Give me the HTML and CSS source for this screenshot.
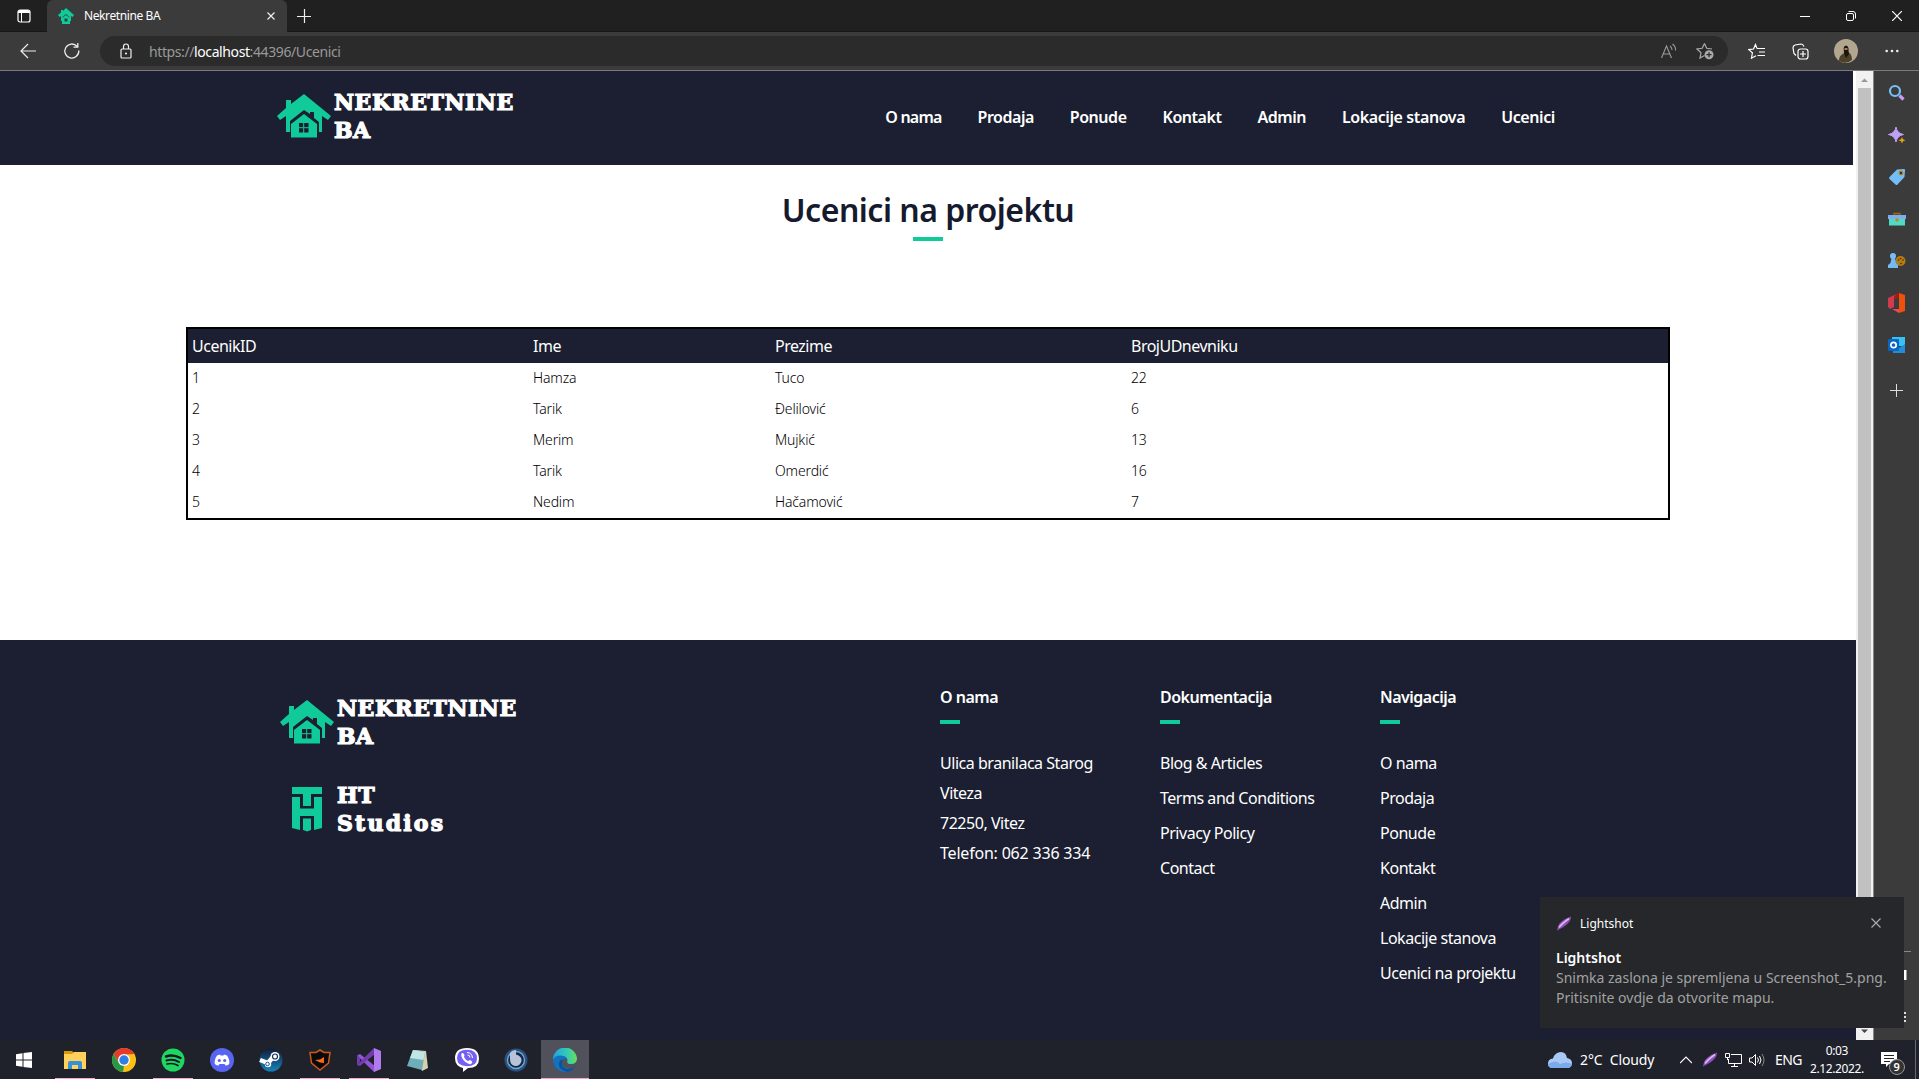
FILE: index.html
```html
<!DOCTYPE html>
<html lang="bs">
<head>
<meta charset="utf-8">
<title>Nekretnine BA</title>
<link rel="stylesheet" href="styles.css">
</head>
<body>
<svg class="defs" width="0" height="0">
  <defs>
    <symbol id="house" viewBox="0 0 54 45">
      <path fill="#10cb99" d="M27 0 54 22 51 26 45 22V38H42V28L37 24V18H33V20L27 16 13 27V38H9V22L3 26 0 22 9 14V6H14V10Z"/>
      <path fill="#10cb99" d="M27 20 40 30V43.500H14V30Z"/>
      <path fill="#1b1f31" d="M22 29H31.500V38.500H22Z"/>
      <path stroke="#10cb99" d="M26.700 29V39M22 33.700H32"/>
    </symbol>
    <symbol id="feather" viewBox="0 0 16 16">
      <path fill="#8e4fb8" d="M1 15C2 7 7 4 15 1 15 7 9 11 1 15Z"/><path d="M3 12C6 8 9 6 13 3" stroke="#dcb6ee" stroke-width="1.600" fill="none"/>
    </symbol>
  </defs>
</svg>
<div class="screen">
  <div class="tabstrip">
    <div class="workspaces"><svg width="14" height="16" viewBox="0 0 14 16"><rect x="1" y="2" width="12" height="12" rx="2" fill="none" stroke="#fff" stroke-width="1.200"/><path d="M1 4a3 3 0 0 1 3-2h6a3 3 0 0 1 3 2v1H1Z" fill="#fff"/><path d="M4.500 5v9" stroke="#fff"/></svg></div>
    <div class="tab">
      <svg width="16" height="16" viewBox="0 0 16 16"><path d="M8 0 16 7 14.500 9 13 8V13H11.500V9L8 6 4.500 9V13H3V8L1.500 9 0 7 3 4.500V2H5V3Z" fill="#10cb99"/><path d="M8 7 12 10V16H4V10Z" fill="#10cb99"/><path d="M6.500 10.500h3v3h-3Z" fill="#25493f"/></svg>
      <span class="tab-title">Nekretnine BA</span>
      <svg width="10" height="10" viewBox="0 0 10 10"><path d="M1.500 1.500l7 7M8.500 1.500l-7 7" stroke="#eee" stroke-width="1.200"/></svg>
    </div>
    <svg class="newtab" width="14" height="14" viewBox="0 0 14 14"><path d="M7.500 0v14M0 7.500h14" stroke="#eee" stroke-width="1.200"/></svg>
    <div class="window-buttons">
      <svg width="10" height="10" viewBox="0 0 10 10"><path d="M0 5.500h10" stroke="#fff"/></svg>
      <svg width="10" height="10" viewBox="0 0 10 10" fill="none" stroke="#fff"><rect x=".5" y="2.500" width="7" height="7" rx="1.500"/><path d="M2.500 .5H7A2.500 2.500 0 0 1 9.500 3V7.500"/></svg>
      <svg width="10" height="10" viewBox="0 0 10 10"><path d="M0 0l10 10M10 0L0 10" stroke="#fff" stroke-width="1.200"/></svg>
    </div>
  </div>
  <div class="toolbar">
    <svg width="16" height="16" viewBox="0 0 16 16" fill="none" stroke="#eee" stroke-width="1.200"><path d="M8 1 1 8l7 7M1 8h15"/></svg>
    <svg class="reload" width="18" height="18" viewBox="0 0 18 18" fill="none" stroke="#eee" stroke-width="1.300"><path d="M15.800 8.500A7 7 0 1 1 14 4.300M14.800 1v4.200H10.500"/></svg>
    <div class="address">
      <svg width="12" height="16" viewBox="0 0 12 16" fill="none" stroke="#eee" stroke-width="1.200"><rect x="1" y="6" width="10" height="9" rx="1"/><path d="M3.500 6V3.500a2.500 2.500 0 0 1 5 0V6"/><circle cx="6" cy="10.500" r=".5" fill="#eee"/></svg>
      <span class="url">https://<b>localhost</b>:44396/Ucenici</span>
      <svg width="16" height="16" viewBox="0 0 16 16" fill="none" stroke="#999" stroke-width="1.100"><path d="M.5 15 5.500 3l5 12M2.300 11h6.400M9 3a5 5 0 0 1 2 4M11.500 1a7 7 0 0 1 3 6.500"/></svg>
      <svg class="star" width="18" height="18" viewBox="0 0 18 18"><path d="M8.500 1.500 6.200 6.300 1 7l4 3.700-1 5.400 4.500-2.500M8.500 1.500l2.200 4.800L16 7" fill="none" stroke="#aaa" stroke-width="1.200"/><circle cx="13" cy="12.700" r="4.500" fill="#aaa"/><path d="M13 10.200v5M10.500 12.700h5" stroke="#2b2b2b" stroke-width="1.200"/></svg>
    </div>
    <div class="toolbar-actions">
      <svg width="17" height="17" viewBox="0 0 17 17" fill="none" stroke="#fff" stroke-width="1.200"><path d="M9 5.500h8M11 9h6M9.500 12.500H17M9 5.500 7.500 1.500 5.500 6 .8 6.600l3.600 3.200-.9 5.400 4.500-2.400"/></svg>
      <svg width="17" height="17" viewBox="0 0 17 17" fill="none" stroke="#fff" stroke-width="1.200"><rect x="6" y="6" width="10" height="10" rx="2.500"/><path d="M11 8v6M8 11h6M4 12.500 2 10.500 1 5a3 3 0 0 1 2-3L9 1q2 0 3 2.500"/></svg>
      <svg width="24" height="24" viewBox="0 0 24 24"><circle cx="12" cy="12" r="12" fill="#b3a68f"/><path d="M5 22C5 16 9 15 10 14L9.500 9Q12 5 14.500 9L14 13q4 2 4 8-6 5-13 1Z" fill="#4d4227"/><path d="M10 8q2-3 4 0l1 7-3 4-2-5Z" fill="#1b1512"/><path d="M10.500 9h3v2h-3Z" fill="#b57a5c"/></svg>
      <svg width="14" height="4" viewBox="0 0 14 4" fill="#eee"><circle cx="1.700" cy="2" r="1.300"/><circle cx="7" cy="2" r="1.300"/><circle cx="12.300" cy="2" r="1.300"/></svg>
    </div>
  </div>
  <div class="viewport">
    <div class="page">
      <header class="site-header">
        <div class="brand"><svg width="54" height="45"><use href="#house"/></svg><span>NEKRETNINE<br>BA</span></div>
        <nav><a class="short">O nama</a><a>Prodaja</a><a>Ponude</a><a>Kontakt</a><a>Admin</a><a class="long">Lokacije stanova</a><a class="long">Ucenici</a></nav>
      </header>
      <main>
        <h1>Ucenici na projektu</h1>
        <div class="rule"></div>
        <table>
          <colgroup><col class="c1"><col class="c2"><col class="c3"><col></colgroup>
          <tr><th>UcenikID</th><th>Ime</th><th>Prezime</th><th>BrojUDnevniku</th></tr>
          <tr><td>1</td><td>Hamza</td><td>Tuco</td><td>22</td></tr>
          <tr><td>2</td><td>Tarik</td><td>Đelilović</td><td>6</td></tr>
          <tr><td>3</td><td>Merim</td><td>Mujkić</td><td>13</td></tr>
          <tr><td>4</td><td>Tarik</td><td>Omerdić</td><td>16</td></tr>
          <tr><td>5</td><td>Nedim</td><td>Hačamović</td><td>7</td></tr>
        </table>
      </main>
      <footer>
        <div class="footer-brands">
          <div class="brand"><svg width="54" height="45"><use href="#house"/></svg><span>NEKRETNINE<br>BA</span></div>
          <div class="brand studio"><svg width="32" height="45" viewBox="0 0 32 45" fill="#10cb99"><path d="M1 0H31V7H20V19H12V7H1Z"/><path d="M1 10H9V21.500H23V10H31V41L23 43V29H9V43L1 41Z"/><path d="M12 31.500H20V43L16 44.500 12 43Z"/></svg><span>HT<br><span class="wide">Studios</span></span></div>
        </div>
        <section><h2>O nama</h2><p>Ulica branilaca Starog<br>Viteza<br>72250, Vitez<br><span class="phone">Telefon: 062 336 334</span></p></section>
        <section><h2>Dokumentacija</h2><ul><li>Blog &amp; Articles</li><li>Terms and Conditions</li><li>Privacy Policy</li><li>Contact</li></ul></section>
        <section><h2>Navigacija</h2><ul><li>O nama</li><li>Prodaja</li><li>Ponude</li><li>Kontakt</li><li>Admin</li><li>Lokacije stanova</li><li>Ucenici na projektu</li></ul></section>
      </footer>
    </div>
    <div class="scrollbar">
      <svg width="17" height="17" viewBox="0 0 17 17"><path d="M5 11 8.500 7.500 12 11Z" fill="#999"/></svg>
      <div class="thumb"></div>
      <svg width="17" height="17" viewBox="0 0 17 17"><path d="M5 6.500 8.500 10 12 6.500Z" fill="#444"/></svg>
    </div>
    <aside>
      <svg width="18" height="18" viewBox="0 0 18 18"><circle cx="7" cy="7" r="5" fill="none" stroke="#75c1f7" stroke-width="2.200"/><path d="M11.500 11.500 15.500 15.500" stroke="#c89df5" stroke-width="3.200"/></svg>
      <svg width="18" height="18" viewBox="0 0 18 18"><path d="M8 1 Q8.800 7.200 15.500 8.500 Q9 9.800 8 16 Q7 9.800.5 8.500 Q7 7.200 8 1Z" fill="#bfa0f5" stroke="#bfa0f5"/><path d="M14 11 15 13.200 17.500 14.200 15 15.200 14 17.500 13 15.200 10.500 14.200 13 13.200Z" fill="#e8a40c"/></svg>
      <svg width="18" height="18" viewBox="0 0 18 18"><path d="M9 1.500 16 1Q17 1 17 2L16.500 9 9.500 16.500Q8.500 17.500 7.500 16.500L1.500 11Q.5 10 1.500 9Z" fill="#75bdf7"/><circle cx="13" cy="5" r="1.800" fill="#333" stroke="#bb8200" stroke-width="1.200"/></svg>
      <svg width="18" height="18" viewBox="0 0 18 18"><path d="M6 6V3.500h6V6" fill="none" stroke="#9d700c" stroke-width="1.300"/><path d="M1 9H17V15.500H1Z" fill="#52d9c1"/><path d="M0 5H18V9H0Z" fill="#80acf0"/><circle cx="9" cy="10" r="1.700" fill="#bf8a18"/></svg>
      <svg width="18" height="18" viewBox="0 0 18 18"><circle cx="12.500" cy="9" r="5" fill="#b57c13"/><g fill="#3b2a08"><circle cx="10.500" cy="8" r=".8"/><circle cx="12.500" cy="6.500" r=".8"/><circle cx="15" cy="8" r=".8"/><circle cx="13" cy="11.500" r=".8"/></g><circle cx="5" cy="4" r="3" fill="#7bbcf8"/><path d="M3.500 6h3.500l1 5 2 2v3H0V13l2.500-2Z" fill="#75b9f5"/></svg>
      <svg class="office" width="18" height="20" viewBox="0 0 18 20"><path d="M11 0V4L6 6V14L2 16 0 14V5Z" fill="#d13a4f"/><path d="M9 0 11 0V4L6 6V4Z" fill="#a81715"/><path d="M4 16 11 16V20Z" fill="#ed4661"/><path d="M11 0 17 2V18L11 20Z" fill="#ee5109"/></svg>
      <svg width="18" height="18" viewBox="0 0 18 18"><path d="M4 1H17V10H4Z" fill="#37c2f3"/><path d="M5 9 11 12 17 8V17H5Z" fill="#208dd5"/><rect y="3" width="11" height="12" rx="1" fill="#0867c4"/><circle cx="5.500" cy="9" r="2.700" fill="none" stroke="#fff" stroke-width="1.700"/></svg>
      <svg class="aside-add" width="13" height="13" viewBox="0 0 13 13"><path d="M6.500 0v13M0 6.500h13" stroke="#ddd"/></svg>
      <div class="aside-bottom"><i></i><svg width="6" height="12" viewBox="0 0 6 12"><path d="M0 1H2.500V11H0" fill="#fff"/></svg><svg width="6" height="12" viewBox="0 0 6 12" fill="#ddd"><path d="M0 1H2V3H0ZM0 5H2V7H0ZM0 9H2V11H0Z"/></svg></div>
    </aside>
  </div>
  <div class="taskbar">
    <div class="apps">
      <div class="app start"><svg width="16" height="16" viewBox="0 0 16 16" fill="#fff"><path d="M0 2.200 6.500 1.300V7.500H0ZM7.500 1.100 16 0V7.500H7.500ZM0 8.500H6.500V14.700L0 13.800ZM7.500 8.500H16V16L7.500 14.900Z"/></svg></div>
      <div class="app run"><svg width="22" height="18" viewBox="0 0 22 18"><path d="M0 0H8L10 2V5H0Z" fill="#d99b05"/><path d="M0 3H8L10 1H22V18H0Z" fill="#ffd15c"/><path d="M4 18V12Q4 10 6 10H16Q18 10 18 12V18H14V14H8V18Z" fill="#3293d8"/></svg></div>
      <div class="app"><svg width="24" height="24" viewBox="0 0 24 24"><circle cx="12" cy="12" r="12" fill="#fbc116"/><path d="M1.600 6A12 12 0 0 1 22.400 6L12 6.500 7 15Z" fill="#e33b2e"/><path d="M1.600 6 6.800 15 12 17.500 11 24A12 12 0 0 1 1.600 6Z" fill="#279847"/><circle cx="12" cy="12" r="6" fill="#fff"/><circle cx="12" cy="12" r="4.700" fill="#337de5"/></svg></div>
      <div class="app run"><svg width="24" height="24" viewBox="0 0 24 24" fill="none" stroke="#111827" stroke-linecap="round"><circle cx="12" cy="12" r="11.500" fill="#1ed760" stroke="none"/><path d="M5 8.500Q12 6 19.500 10" stroke-width="2.400"/><path d="M5.500 12.500Q12 10.500 18 14" stroke-width="2"/><path d="M6 16Q12 14.500 17 17.500" stroke-width="1.700"/></svg></div>
      <div class="app"><svg width="24" height="24" viewBox="0 0 24 24"><circle cx="12" cy="12" r="12" fill="#5865f2"/><path d="M7 7.500 10 6.500 10.500 7.500H13.500L14 6.500 17 7.500Q20 12 19.200 16 17.500 17.500 15.500 17.500L14.500 16H9.500L8.500 17.500Q6.500 17.500 4.800 16 4 12 7 7.500Z" fill="#fff"/><circle cx="9.300" cy="12.500" r="1.600" fill="#5865f2"/><circle cx="14.700" cy="12.500" r="1.600" fill="#5865f2"/></svg></div>
      <div class="app"><svg width="24" height="24" viewBox="0 0 24 24"><defs><linearGradient id="steam" x1="0" y1="0" x2="0" y2="1"><stop offset="0" stop-color="#101d3c"/><stop offset="1" stop-color="#1584bc"/></linearGradient></defs><circle cx="12" cy="12" r="11.500" fill="url(#steam)"/><path d="M1 12 9 15 14 9" stroke="#fff" stroke-width="4.500" fill="none"/><circle cx="16" cy="8.500" r="4.500" fill="#fff"/><circle cx="16" cy="8.500" r="2.500" fill="#fff" stroke="#193153" stroke-width="1.200"/><circle cx="9" cy="16" r="3.200" fill="#fff"/><circle cx="8.500" cy="16" r="1.800" fill="none" stroke="#1c5384"/></svg></div>
      <div class="app run"><svg width="22" height="22" viewBox="0 0 22 22" fill="#0a0a0b" stroke="#c75a1e" stroke-width="1.500"><path d="M1 3.500 7 3.500 11 1 15 3.500 21 3.500 19.500 14 11 21 2.500 14Z"/><path d="M6 11 11 10.500 15 8V14L11 13.500Z" fill="#ff661b" stroke="none"/></svg></div>
      <div class="app run"><svg width="24" height="24" viewBox="0 0 24 24"><path d="M0 7.500 3 6 18 18V23.500L17 24Z" fill="#9254d5"/><path d="M0 7.500 3 10.500V13.500L0 17ZM17 0 18 6 3 18 0 17Z" fill="#713cae"/><path d="M17 0 24 3V21L17 24Z" fill="#b17bf0"/></svg></div>
      <div class="app"><svg width="24" height="24" viewBox="0 0 24 24"><path d="M8 2 20 3 22 20 16 23Z" fill="#d6d1ad"/><path d="M7 2 19 4 16 22 1 18Z" fill="#6fadb8"/><path d="M7 2 19 4 17.500 12 4 10Z" fill="#c0e5e7"/></svg></div>
      <div class="app"><svg width="24" height="24" viewBox="0 0 24 24"><path d="M12 0Q24 0 24 11 24 20 13 20L8 24V20Q0 18 0 10 0 0 12 0Z" fill="#fff"/><path d="M12 1.800Q22 1.800 22 10.500 22 18.200 12 18.200 2 18 2 10 2 1.800 12 1.800Z" fill="#7360f2"/><path d="M6.500 5.500Q8 4 9.500 7L9 9Q10.500 12 13 13L15 12Q18 13.500 17 15 16 17 13 15.500 8 13 6.500 8.500 6 6.500 6.500 5.500Z" fill="#fff"/><path d="M12 4.500Q17 4.500 17.500 10M12.500 7Q15 7 15 9.500" fill="none" stroke="#fff" stroke-width="1"/></svg></div>
      <div class="app"><svg width="24" height="24" viewBox="0 0 24 24"><circle cx="12" cy="12" r="11.500" fill="#304e84"/><circle cx="12" cy="12" r="8.500" fill="#182743" stroke="#5eb4d8" stroke-width="1.300"/><path d="M6 5Q8 2 12 2V6.500Q18 8 17.500 13 16 18.500 11 18 6 17 6 11Z" fill="#b8c2d8"/></svg></div>
      <div class="app active"><svg width="24" height="24" viewBox="0 0 24 24"><defs><linearGradient id="edge" x1="0" x2="1"><stop offset="0" stop-color="#259ee4"/><stop offset=".6" stop-color="#34cbb5"/><stop offset="1" stop-color="#68df58"/></linearGradient></defs><path d="M0 12A12 12 0 0 1 24 11Q23.500 16 18 16 13 16 14.500 12 14 8 8 8 3 8 0 12Z" fill="url(#edge)"/><path d="M0 12Q2 7 8 7.500 13 8 14 11 9.500 10 9 14 9 20 16 20.500 20 20.500 22.400 18A12 12 0 0 1 0 12Z" fill="#1272bf"/><path d="M9.500 12Q7 20 14 21 19 21.500 22.400 18A12 12 0 0 1 14 24Q5 21 6 15 7 11 9.500 12Z" fill="#0d509c"/></svg></div>
    </div>
    <div class="tray">
      <svg class="cloud" width="24" height="16" viewBox="0 0 24 16"><path d="M5 16Q0 16 0 11.500 0 7 5 6.500 7 0 13 0 18 0 19 6 24 7 24 11 24 16 19 16Z" fill="#a8c9f6"/><path d="M5 16Q0 16 0 12 8 7 12 12 18 9 24 12 23 16 19 16Z" fill="#7daae8"/></svg>
      <span class="weather">2°C&nbsp; Cloudy</span>
      <svg class="chev" width="12" height="8" viewBox="0 0 12 8"><path d="M0 7 6 1l6 6" stroke="#fff" fill="none" stroke-width="1.200"/></svg>
      <svg class="tray-feather" width="16" height="17"><use href="#feather"/></svg>
      <svg class="net" width="17" height="14" viewBox="0 0 17 14" fill="none" stroke="#fff"><path d="M6 1.500H16.500V10.500H3.500V6M9.500 10.500V13M6 13.500H13M.5.500H4.500V4.500H.5ZM2.500 4.500V7"/></svg>
      <svg class="vol" width="17" height="14" viewBox="0 0 17 14" fill="none" stroke="#fff"><path d="M.5 5H3L6.500 1.500V12.500L3 9H.5ZM8.500 4.500Q10.500 7 8.500 9.500M10.500 3Q13.500 7 10.500 11"/><path d="M13 1Q17 7 13 13" stroke="#888"/></svg>
      <span class="lang">ENG</span>
      <span class="clock">0:03<br>2.12.2022.</span>
      <div class="notes"><svg width="16" height="15" viewBox="0 0 16 15"><path d="M0 0H16V12H8L5 15V12H0Z" fill="#fff"/><path d="M3 3.500H13M3 6.500H13M3 9.500H9" stroke="#222" /></svg><span class="badge">9</span></div>
      <i class="peek"></i>
    </div>
  </div>
  <div class="toast">
    <div class="toast-head"><svg width="16" height="17"><use href="#feather"/></svg><span>Lightshot</span><svg class="toast-close" width="10" height="10" viewBox="0 0 10 10"><path d="M.5.500l9 9M9.500.500l-9 9" stroke="#aaa" stroke-width="1.200"/></svg></div>
    <div class="toast-title">Lightshot</div>
    <div class="toast-text">Snimka zaslona je spremljena u Screenshot_5.png.<br>Pritisnite ovdje da otvorite mapu.</div>
  </div>
</div>
</body>
</html>
```
FILE: styles.css
```css
* { box-sizing: border-box; }
body { margin: 0; overflow: hidden; font-family: "Noto Sans", sans-serif; }
svg { display: block; flex: none; }
.defs { position: absolute; }
.screen { position: relative; width: 1919px; height: 1079px; display: flex; flex-direction: column; white-space: nowrap; }

.tabstrip { height: 32px; background: #202020; display: flex; align-items: center; border-bottom: 1px solid #171717; }
.workspaces { width: 47px; padding-left: 17px; }
.tab { width: 240px; height: 32px; background: #3b3b3b; border-radius: 6px 6px 0 0; display: flex; align-items: center; padding: 0 11px; color: #fff; font-size: 12px; }
.tab-title { flex: 1; padding-left: 10px; letter-spacing: -.4px; }
.newtab { margin-left: 10px; }
.window-buttons { margin-left: auto; display: flex; gap: 36px; padding-right: 17px; }

.toolbar { height: 39px; background: #3b3b3b; border-bottom: 1px solid #7a7a7a; display: flex; align-items: center; padding-left: 20px; }
.reload { margin: 0 19px 0 27px; }
.address { width: 1628px; height: 30px; border-radius: 15px; background: #2b2b2b; display: flex; align-items: center; padding: 0 14px 0 20px; }
.url { flex: 1; padding-left: 17px; font-size: 14px; letter-spacing: -.4px; color: #999; }
.url b { color: #fff; font-weight: 400; }
.star { margin-left: 19px; }
.toolbar-actions { display: flex; align-items: center; padding-left: 20px; }
.toolbar-actions svg:nth-child(2) { margin-left: 27px; }
.toolbar-actions svg:nth-child(3) { margin-left: 25px; }
.toolbar-actions svg:nth-child(4) { margin-left: 27px; }

.viewport { height: 969px; display: flex; }
.page { width: 1856px; background: #fff; display: flex; flex-direction: column; }
.site-header { width: 1853px; height: 94px; background: #1b1f31; display: flex; align-items: flex-start; padding: 23px 298px 0 277px; }
.brand { display: flex; gap: 3px; color: #fff; font: 700 22px/28px "DejaVu Serif", serif; letter-spacing: .5px; -webkit-text-stroke: 1.2px #fff; }
.brand > span { margin-top: -6px; }
.wide { letter-spacing: 2.2px; }
nav { margin-left: auto; padding-top: 11px; display: flex; gap: 36px; color: #fff; font-weight: 600; font-size: 16px; line-height: 24px; letter-spacing: -.47px; }
.short { letter-spacing: -.8px; }
.long { letter-spacing: -.4px; }

main { height: 475px; display: flex; flex-direction: column; align-items: center; }
h1 { margin: 21px 0 0; font-size: 32px; line-height: 48px; font-weight: 600; color: #161a2e; letter-spacing: -.5px; }
.rule { width: 30px; height: 4px; background: #10cb99; margin: 3px 0 86px; }
table { width: 1484px; border: 2px solid #000; border-collapse: separate; border-spacing: 0; table-layout: fixed; }
.c1 { width: 341px; } .c2 { width: 242px; } .c3 { width: 356px; }
th, td { padding: 0 4px; text-align: left; }
th { height: 34px; background: #1b1f31; color: #fff; font-weight: 400; font-size: 16px; letter-spacing: -.5px; }
td { height: 31px; padding-bottom: 2px; font-size: 14px; font-weight: 300; color: #000; letter-spacing: -.15px; }

footer { height: 400px; background: #1b1f31; color: #fff; display: flex; padding: 45px 0 0 280px; }
.footer-brands { width: 660px; padding-top: 15px; }
.studio { margin-top: 37px; padding-left: 11px; gap: 14px; }
footer section { width: 220px; }
h2 { margin: 0 0 24px; font-size: 16px; line-height: 24px; font-weight: 600; letter-spacing: -.5px; }
h2::after { content: ""; display: block; width: 20px; height: 4px; margin-top: 11px; background: #10cb99; }
p { margin: 0; font-size: 16px; line-height: 30px; letter-spacing: -.47px; }
.phone { letter-spacing: -.2px; }
ul { margin: 0; padding: 0; list-style: none; font-size: 16px; line-height: 30px; letter-spacing: -.47px; }
li { height: 35px; }

.scrollbar { width: 18px; background: #f1f1f1; border-right: 1px solid #888; display: flex; flex-direction: column; }
.thumb { flex: 1; width: 13px; margin-left: 2px; background: #c1c1c1; }
aside { width: 45px; background: #3b3b3b; display: flex; flex-direction: column; align-items: center; gap: 24px; padding-top: 13px; }
.office { margin: -1px 0; }
.aside-add { margin-top: 6px; }
.aside-bottom { margin: auto 0 17px 30px; align-self: flex-start; display: flex; flex-direction: column; }
.aside-bottom i { width: 7px; height: 1px; margin-bottom: 17px; background: #888; }
.aside-bottom svg + svg { margin-top: 30px; }

.taskbar { height: 39px; background: #20222b; display: flex; justify-content: space-between; color: #fff; }
.apps { display: flex; }
.app { width: 40px; margin-right: 9px; display: flex; align-items: center; justify-content: center; border-bottom: 1px solid transparent; padding-top: 1px; }
.start { margin: 0 11px 0 4px; }
.run { border-color: #f7a8c9; }
.active { width: 48px; margin: 0 0 0 -4px; background: #50515b; border-color: #f7a8c9; }
.tray { width: 371px; display: flex; align-items: center; font-size: 14px; }
.weather { width: 98px; margin-left: 8px; letter-spacing: -.1px; }
.chev { margin: 0 10px 0 2px; }
.net { margin: 0 7px 0 7px; }
.lang { margin-left: 9px; width: 35px; letter-spacing: -.6px; }
.clock { text-align: center; font-size: 12px; line-height: 18px; letter-spacing: -.4px; }
.notes { position: relative; margin-left: 17px; }
.badge { position: absolute; left: 8px; top: 7px; width: 16px; height: 16px; border: 1px solid #999; border-radius: 8px; background: #333; font: 600 11px/14px "Noto Sans", sans-serif; text-align: center; }
.peek { width: 1px; height: 39px; margin: 0 3px 0 auto; background: #666973; }

.toast { position: absolute; left: 1540px; top: 897px; width: 364px; height: 131px; background: #25272a; padding: 17px 16px; color: #fff; }
.toast-head { display: flex; align-items: center; gap: 8px; height: 18px; font-size: 12px; }
.toast-close { margin: 0 7px 0 auto; }
.toast-title { margin-top: 16px; font-size: 14px; line-height: 20px; font-weight: 600; }
.toast-text { font-size: 14px; line-height: 20px; color: #a2a2a2; }
```
